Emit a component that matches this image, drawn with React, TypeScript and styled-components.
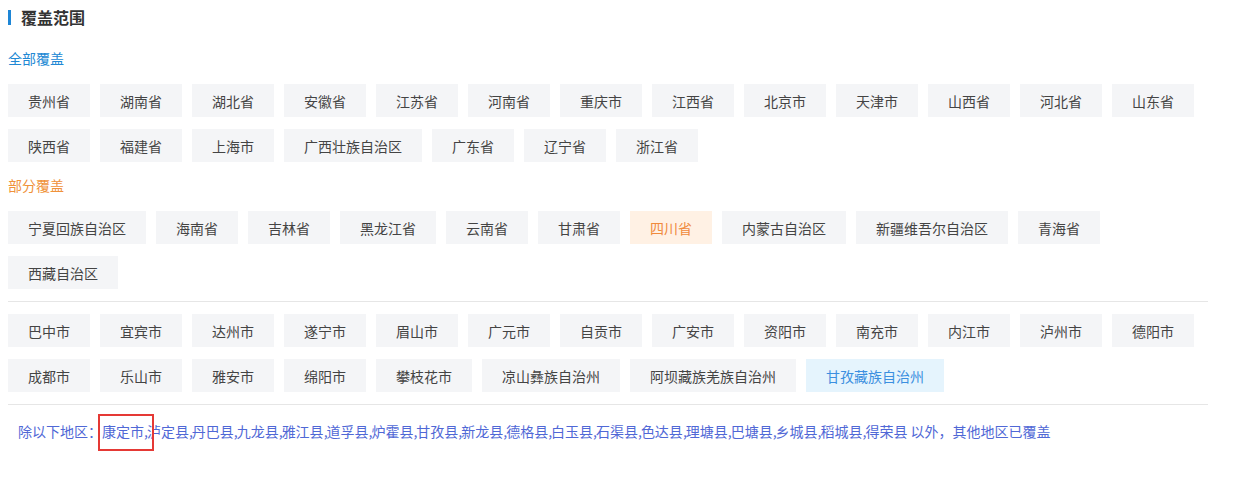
import React from "react";
import styled, { createGlobalStyle } from "styled-components";

const Global = createGlobalStyle`
  html, body { margin: 0; padding: 0; background: #fff; }
  body {
    font-family: "Microsoft YaHei", "Noto Sans CJK SC", "Noto Sans", sans-serif;
    color: #333;
  }
`;

const Page = styled.div`
  padding: 0 8px 40px;
  width: 1200px;
`;

const Title = styled.div`
  display: flex;
  align-items: center;
  gap: 10px;
  height: 34px;
  font-size: 16px;
  font-weight: bold;
  color: #333;
  &::before {
    content: "";
    display: block;
    width: 3px;
    height: 15px;
    background: #1e86d6;
  }
`;

const Label = styled.div<{ $tone: "blue" | "orange"; $top: number }>`
  margin-top: ${(p) => p.$top}px;
  margin-bottom: 16px;
  line-height: 20px;
  font-size: 14px;
  color: ${(p) => (p.$tone === "blue" ? "#2188d4" : "#f0923a")};
`;

const TagList = styled.div`
  display: flex;
  flex-wrap: wrap;
  gap: 12px 10px;
`;

type Tone = "normal" | "orange" | "blue";

const Tag = styled.span<{ $tone?: Tone }>`
  display: inline-flex;
  align-items: center;
  height: 33px;
  padding: 0 20px;
  font-size: 14px;
  white-space: nowrap;
  background: ${(p) =>
    p.$tone === "orange" ? "#fff1e4" : p.$tone === "blue" ? "#e5f4fd" : "#f4f5f7"};
  color: ${(p) =>
    p.$tone === "orange" ? "#f08a3c" : p.$tone === "blue" ? "#3b8fe0" : "#444"};
`;

const Divider = styled.div`
  height: 1px;
  background: #e6e6e6;
  margin: 12px 0;
`;

const Note = styled.div`
  position: relative;
  margin-top: 16px;
  padding-left: 10px;
  line-height: 20px;
  font-size: 14px;
  color: #5068d6;
  white-space: nowrap;
`;

const Marked = styled.span`
  display: inline-block;
  position: relative;
  &::after {
    content: "";
    position: absolute;
    left: -4px;
    top: -7px;
    width: 52px;
    height: 33px;
    border: 2px solid #e53935;
    z-index: 1;
  }
`;

const Comma = styled.span`
  margin-right: -1px;
`;

const full = [
  "贵州省", "湖南省", "湖北省", "安徽省", "江苏省", "河南省", "重庆市", "江西省",
  "北京市", "天津市", "山西省", "河北省", "山东省", "陕西省", "福建省", "上海市",
  "广西壮族自治区", "广东省", "辽宁省", "浙江省",
];

const partial = [
  "宁夏回族自治区", "海南省", "吉林省", "黑龙江省", "云南省", "甘肃省", "四川省",
  "内蒙古自治区", "新疆维吾尔自治区", "青海省", "西藏自治区",
];

const cities = [
  "巴中市", "宜宾市", "达州市", "遂宁市", "眉山市", "广元市", "自贡市", "广安市",
  "资阳市", "南充市", "内江市", "泸州市", "德阳市", "成都市", "乐山市", "雅安市",
  "绵阳市", "攀枝花市", "凉山彝族自治州", "阿坝藏族羌族自治州", "甘孜藏族自治州",
];

const counties = [
  "泸定县", "丹巴县", "九龙县", "雅江县", "道孚县", "炉霍县", "甘孜县", "新龙县",
  "德格县", "白玉县", "石渠县", "色达县", "理塘县", "巴塘县", "乡城县", "稻城县", "得荣县",
];

export default function App() {
  return (
    <>
      <Global />
      <Page>
        <Title>覆盖范围</Title>
        <Label $tone="blue" $top={14}>全部覆盖</Label>
        <TagList>
          {full.map((n) => (
            <Tag key={n}>{n}</Tag>
          ))}
        </TagList>
        <Label $tone="orange" $top={13}>部分覆盖</Label>
        <TagList>
          {partial.map((n) => (
            <Tag key={n} $tone={n === "四川省" ? "orange" : "normal"}>{n}</Tag>
          ))}
        </TagList>
        <Divider />
        <TagList>
          {cities.map((n) => (
            <Tag key={n} $tone={n === "甘孜藏族自治州" ? "blue" : "normal"}>{n}</Tag>
          ))}
        </TagList>
        <Divider />
        <Note>
          除以下地区：<Marked>康定市</Marked>
          {counties.map((c) => (
            <React.Fragment key={c}>
              <Comma>,</Comma>
              {c}
            </React.Fragment>
          ))}{" "}
          以外，其他地区已覆盖
        </Note>
      </Page>
    </>
  );
}
